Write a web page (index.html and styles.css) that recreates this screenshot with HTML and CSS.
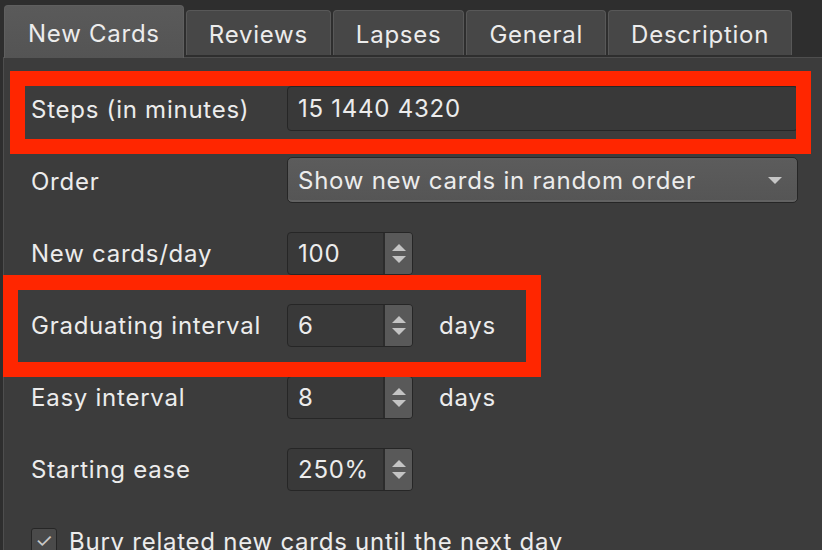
FILE: index.html
```html
<!DOCTYPE html>
<html lang="en">
<head>
    <meta charset="UTF-8">
    <meta name="viewport" content="width=device-width, initial-scale=1.0">
    <title>Deck Options</title>
    <link rel="stylesheet" href="styles.css">
</head>
<body>
    <div class="tabs">
        <div class="tab active">New Cards</div>
        <div class="tab">Reviews</div>
        <div class="tab">Lapses</div>
        <div class="tab">General</div>
        <div class="tab">Description</div>
    </div>
    <div class="panel">
        <div class="row">
            <div class="label">Steps (in minutes)</div>
            <div class="field wide">15 1440 4320</div>
        </div>
        <div class="row">
            <div class="label">Order</div>
            <div class="select">Show new cards in random order<span class="arrow"></span></div>
        </div>
        <div class="row">
            <div class="label">New cards/day</div>
            <div class="spin">
                <div class="spin-value">100</div>
                <div class="spin-buttons"><span class="up"></span><span class="down"></span></div>
            </div>
        </div>
        <div class="row">
            <div class="label">Graduating interval</div>
            <div class="spin">
                <div class="spin-value">6</div>
                <div class="spin-buttons"><span class="up"></span><span class="down"></span></div>
            </div>
            <div class="unit">days</div>
        </div>
        <div class="row">
            <div class="label">Easy interval</div>
            <div class="spin">
                <div class="spin-value">8</div>
                <div class="spin-buttons"><span class="up"></span><span class="down"></span></div>
            </div>
            <div class="unit">days</div>
        </div>
        <div class="row">
            <div class="label">Starting ease</div>
            <div class="spin">
                <div class="spin-value">250%</div>
                <div class="spin-buttons"><span class="up"></span><span class="down"></span></div>
            </div>
        </div>
        <div class="check-row">
            <span class="checkbox">✓</span>
            Bury related new cards until the next day
        </div>

        <!-- красные рамки-пометки поверх формы -->
        <div class="mark mark-steps"></div>
        <div class="mark mark-grad"></div>
    </div>
</body>
</html>
```

FILE: styles.css
```css
body {
    font-family: Inter, "Noto Sans", sans-serif;
    font-size: 24px;
    letter-spacing: 0.75px;
    margin: 0;
    padding: 0;
    background-color: #2e2e2e;
    color: #ececec;
    overflow: hidden;
}
.tabs {
    display: flex;
    align-items: flex-end;
    gap: 2px;
    padding: 5px 0 0 4px;
}
.tab {
    height: 45px;
    margin-bottom: 2px;
    padding: 3px 22px 0;
    display: flex;
    align-items: center;
    box-sizing: border-box;
    background-color: #474747;
    border: 1px solid #585858;
    border-bottom: none;
    border-radius: 4px 4px 0 0;
}
.tab.active {
    height: 53px;
    margin-bottom: -1px;
    padding: 3px 23px 0;
    background: linear-gradient(#5a5a5a, #545454);
    border-color: #5f5f5f;
    position: relative;
    z-index: 1;
}
.panel {
    position: relative;
    margin-left: 3px;
    border-top: 1px solid #4e4e4e;
    border-left: 1px solid #4e4e4e;
    background-color: #3c3c3c;
    padding: 15px 24px 0 27px;
    height: 600px;
}
.row {
    display: flex;
    align-items: center;
    height: 72px;
}
.label {
    width: 256px;
    flex-shrink: 0;
}
.field {
    height: 45px;
    box-sizing: border-box;
    background-color: #393939;
    border: 1px solid #262626;
    border-radius: 4px;
    padding: 0 10px;
    display: flex;
    align-items: center;
}
.wide {
    flex: 1;
    margin-top: -1px;
}
.select {
    flex: 1;
    height: 46px;
    box-sizing: border-box;
    background: linear-gradient(#5c5c5c, #555555);
    border: 1px solid #262626;
    box-shadow: inset 0 -2px 0 #626262;
    border-radius: 5px;
    padding: 0 10px;
    display: flex;
    align-items: center;
    justify-content: space-between;
    margin-top: -2px;
}
.arrow {
    width: 0;
    height: 0;
    border-left: 7px solid transparent;
    border-right: 7px solid transparent;
    border-top: 7px solid #c6c6c6;
    margin-right: 5px;
}
.spin {
    width: 126px;
    height: 43px;
    box-sizing: border-box;
    display: flex;
    border: 1px solid #262626;
    border-radius: 4px;
    background-color: #393939;
    overflow: hidden;
}
.spin-value {
    flex: 1;
    display: flex;
    align-items: center;
    padding-left: 10px;
}
.spin-buttons {
    width: 27px;
    background-color: #595959;
    border-left: 2px solid #2c2c2c;
    display: flex;
    flex-direction: column;
    align-items: center;
    justify-content: center;
    gap: 5px;
}
.up, .down {
    width: 0;
    height: 0;
    border-left: 7px solid transparent;
    border-right: 7px solid transparent;
}
.up {
    border-bottom: 7px solid #c4c4c4;
}
.down {
    border-top: 7px solid #c4c4c4;
}
.unit {
    margin-left: 26px;
}
.check-row {
    display: flex;
    align-items: center;
    gap: 12px;
    height: 72px;
}
.checkbox {
    width: 26px;
    height: 26px;
    box-sizing: border-box;
    border: 1px solid #262626;
    border-radius: 3px;
    background-color: #4a4a4a;
    color: #c8c8c8;
    font-size: 20px;
    letter-spacing: 0;
    display: flex;
    align-items: center;
    justify-content: center;
}
.mark {
    position: absolute;
    box-sizing: border-box;
    border: 15px solid #ff2600;
}
.mark-steps {
    left: 6px;
    top: 13px;
    width: 801px;
    height: 83px;
}
.mark-grad {
    left: -1px;
    top: 217px;
    width: 538px;
    height: 102px;
}
```
